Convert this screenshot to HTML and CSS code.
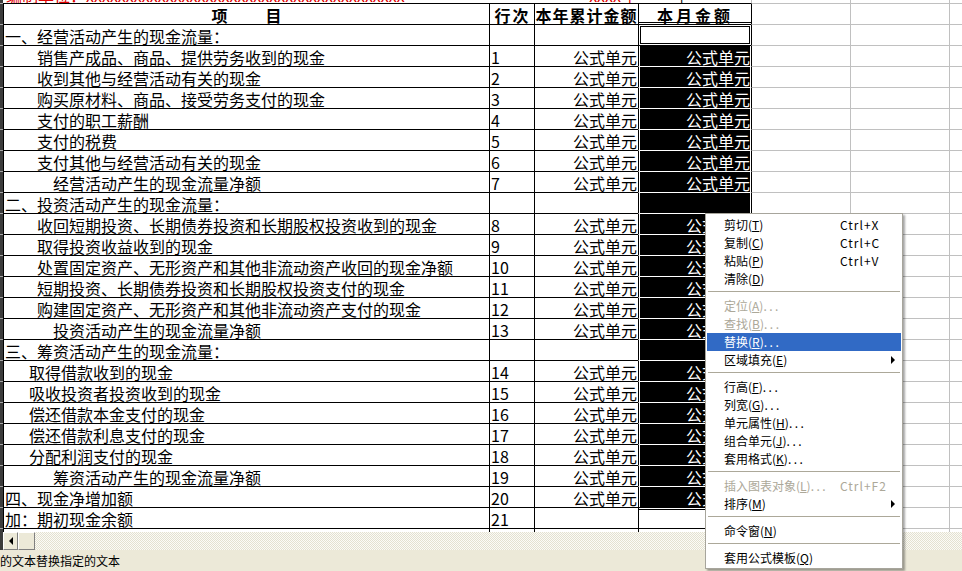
FILE: index.html
```html
<!DOCTYPE html>
<html lang="zh-CN">
<head>
<meta charset="utf-8">
<title>现金流量表</title>
<link rel="stylesheet" href="styles.css">
</head>
<body>
<div class="sheet">
  <div class="row title">
    <div class="st"></div>
    <div class="c1"><span class="red">编制单位：xxxxxxxxxxxxxxxxxxxxxxxxxxxxxxxxxxxxxxxx</span></div>
    <div class="c2"></div>
    <div class="c3"><span class="red">xxxx年</span></div>
    <div class="c4"><span class="blk">| — — — _</span></div>
    <div class="g"></div><div class="g"></div><div class="g"></div>
  </div>
  <div class="row hd">
    <div class="st"></div>
    <div class="c1"><span class="xm">项</span><span>目</span></div>
    <div class="c2 ls2">行次</div>
    <div class="c3 ls1">本年累计金额</div>
    <div class="c4 ls3 hdsel">本月金额</div>
    <div class="g g1"></div><div class="g"></div><div class="g"></div>
  </div>
  <div class="row">
    <div class="st"></div><div class="c1 i0">一、经营活动产生的现金流量：</div><div class="c2"></div><div class="c3"></div><div class="c4 act"></div>
    <div class="g g1"></div><div class="g"></div><div class="g"></div>
  </div>
  <div class="row">
    <div class="st"></div><div class="c1 i2">销售产成品、商品、提供劳务收到的现金</div><div class="c2">1</div><div class="c3">公式单元</div><div class="c4 s first">公式单元</div>
    <div class="g g1"></div><div class="g"></div><div class="g"></div>
  </div>
  <div class="row">
    <div class="st"></div><div class="c1 i2">收到其他与经营活动有关的现金</div><div class="c2">2</div><div class="c3">公式单元</div><div class="c4 s">公式单元</div>
    <div class="g g1"></div><div class="g"></div><div class="g"></div>
  </div>
  <div class="row">
    <div class="st"></div><div class="c1 i2">购买原材料、商品、接受劳务支付的现金</div><div class="c2">3</div><div class="c3">公式单元</div><div class="c4 s">公式单元</div>
    <div class="g g1"></div><div class="g"></div><div class="g"></div>
  </div>
  <div class="row">
    <div class="st"></div><div class="c1 i2">支付的职工薪酬</div><div class="c2">4</div><div class="c3">公式单元</div><div class="c4 s">公式单元</div>
    <div class="g g1"></div><div class="g"></div><div class="g"></div>
  </div>
  <div class="row">
    <div class="st"></div><div class="c1 i2">支付的税费</div><div class="c2">5</div><div class="c3">公式单元</div><div class="c4 s">公式单元</div>
    <div class="g g1"></div><div class="g"></div><div class="g"></div>
  </div>
  <div class="row">
    <div class="st"></div><div class="c1 i2">支付其他与经营活动有关的现金</div><div class="c2">6</div><div class="c3">公式单元</div><div class="c4 s">公式单元</div>
    <div class="g g1"></div><div class="g"></div><div class="g"></div>
  </div>
  <div class="row">
    <div class="st"></div><div class="c1 i3">经营活动产生的现金流量净额</div><div class="c2">7</div><div class="c3">公式单元</div><div class="c4 s">公式单元</div>
    <div class="g g1"></div><div class="g"></div><div class="g"></div>
  </div>
  <div class="row">
    <div class="st"></div><div class="c1 i0">二、投资活动产生的现金流量：</div><div class="c2"></div><div class="c3"></div><div class="c4 s"></div>
    <div class="g g1"></div><div class="g"></div><div class="g"></div>
  </div>
  <div class="row">
    <div class="st"></div><div class="c1 i2">收回短期投资、长期债券投资和长期股权投资收到的现金</div><div class="c2">8</div><div class="c3">公式单元</div><div class="c4 s">公式单元</div>
    <div class="g g1"></div><div class="g"></div><div class="g"></div>
  </div>
  <div class="row">
    <div class="st"></div><div class="c1 i2">取得投资收益收到的现金</div><div class="c2">9</div><div class="c3">公式单元</div><div class="c4 s">公式单元</div>
    <div class="g g1"></div><div class="g"></div><div class="g"></div>
  </div>
  <div class="row">
    <div class="st"></div><div class="c1 i2">处置固定资产、无形资产和其他非流动资产收回的现金净额</div><div class="c2">10</div><div class="c3">公式单元</div><div class="c4 s">公式单元</div>
    <div class="g g1"></div><div class="g"></div><div class="g"></div>
  </div>
  <div class="row">
    <div class="st"></div><div class="c1 i2">短期投资、长期债券投资和长期股权投资支付的现金</div><div class="c2">11</div><div class="c3">公式单元</div><div class="c4 s">公式单元</div>
    <div class="g g1"></div><div class="g"></div><div class="g"></div>
  </div>
  <div class="row">
    <div class="st"></div><div class="c1 i2">购建固定资产、无形资产和其他非流动资产支付的现金</div><div class="c2">12</div><div class="c3">公式单元</div><div class="c4 s">公式单元</div>
    <div class="g g1"></div><div class="g"></div><div class="g"></div>
  </div>
  <div class="row">
    <div class="st"></div><div class="c1 i3">投资活动产生的现金流量净额</div><div class="c2">13</div><div class="c3">公式单元</div><div class="c4 s">公式单元</div>
    <div class="g g1"></div><div class="g"></div><div class="g"></div>
  </div>
  <div class="row">
    <div class="st"></div><div class="c1 i0">三、筹资活动产生的现金流量：</div><div class="c2"></div><div class="c3"></div><div class="c4 s"></div>
    <div class="g g1"></div><div class="g"></div><div class="g"></div>
  </div>
  <div class="row">
    <div class="st"></div><div class="c1 i1">取得借款收到的现金</div><div class="c2">14</div><div class="c3">公式单元</div><div class="c4 s">公式单元</div>
    <div class="g g1"></div><div class="g"></div><div class="g"></div>
  </div>
  <div class="row">
    <div class="st"></div><div class="c1 i1">吸收投资者投资收到的现金</div><div class="c2">15</div><div class="c3">公式单元</div><div class="c4 s">公式单元</div>
    <div class="g g1"></div><div class="g"></div><div class="g"></div>
  </div>
  <div class="row">
    <div class="st"></div><div class="c1 i1">偿还借款本金支付的现金</div><div class="c2">16</div><div class="c3">公式单元</div><div class="c4 s">公式单元</div>
    <div class="g g1"></div><div class="g"></div><div class="g"></div>
  </div>
  <div class="row">
    <div class="st"></div><div class="c1 i1">偿还借款利息支付的现金</div><div class="c2">17</div><div class="c3">公式单元</div><div class="c4 s">公式单元</div>
    <div class="g g1"></div><div class="g"></div><div class="g"></div>
  </div>
  <div class="row">
    <div class="st"></div><div class="c1 i1">分配利润支付的现金</div><div class="c2">18</div><div class="c3">公式单元</div><div class="c4 s">公式单元</div>
    <div class="g g1"></div><div class="g"></div><div class="g"></div>
  </div>
  <div class="row">
    <div class="st"></div><div class="c1 i3">筹资活动产生的现金流量净额</div><div class="c2">19</div><div class="c3">公式单元</div><div class="c4 s">公式单元</div>
    <div class="g g1"></div><div class="g"></div><div class="g"></div>
  </div>
  <div class="row">
    <div class="st"></div><div class="c1 i0">四、现金净增加额</div><div class="c2">20</div><div class="c3">公式单元</div><div class="c4 s">公式单元</div>
    <div class="g g1"></div><div class="g"></div><div class="g"></div>
  </div>
  <div class="row">
    <div class="st"></div><div class="c1 i0">加：期初现金余额</div><div class="c2">21</div><div class="c3"></div><div class="c4 below"></div>
    <div class="g g1"></div><div class="g"></div><div class="g"></div>
  </div>
  <div class="row">
    <div class="st"></div><div class="c1 i0">五、期末现金余额</div><div class="c2">22</div><div class="c3">公式单元</div><div class="c4"></div>
    <div class="g g1"></div><div class="g"></div><div class="g"></div>
  </div>
</div>

<div class="hs">
  <div class="hst"></div>
  <div class="btn"><i class="la"></i></div>
  <div class="btn b2"></div>
  <div class="hatch"></div>
</div>
<div class="status">的文本替换指定的文本</div>

<div class="menu">
  <div class="mi"><span class="lb">剪切(<u>T</u>)</span><span class="sc">Ctrl+X</span></div>
  <div class="mi"><span class="lb">复制(<u>C</u>)</span><span class="sc">Ctrl+C</span></div>
  <div class="mi"><span class="lb">粘贴(<u>P</u>)</span><span class="sc">Ctrl+V</span></div>
  <div class="mi"><span class="lb">清除(<u>D</u>)</span></div>
  <div class="sep"></div>
  <div class="mi dis"><span class="lb">定位(<u>A</u>)<span class="dots">...</span></span></div>
  <div class="mi dis"><span class="lb">查找(<u>B</u>)<span class="dots">...</span></span></div>
  <div class="mi hl"><span class="lb">替换(<u>R</u>)<span class="dots">...</span></span></div>
  <div class="mi"><span class="lb">区域填充(<u>E</u>)</span><i class="arr"></i></div>
  <div class="sep"></div>
  <div class="mi"><span class="lb">行高(<u>F</u>)<span class="dots">...</span></span></div>
  <div class="mi"><span class="lb">列宽(<u>G</u>)<span class="dots">...</span></span></div>
  <div class="mi"><span class="lb">单元属性(<u>H</u>)<span class="dots">...</span></span></div>
  <div class="mi"><span class="lb">组合单元(<u>J</u>)<span class="dots">...</span></span></div>
  <div class="mi"><span class="lb">套用格式(<u>K</u>)<span class="dots">...</span></span></div>
  <div class="sep"></div>
  <div class="mi dis"><span class="lb">插入图表对象(<u>L</u>)<span class="dots">...</span></span><span class="sc">Ctrl+F2</span></div>
  <div class="mi"><span class="lb">排序(<u>M</u>)</span><i class="arr"></i></div>
  <div class="sep"></div>
  <div class="mi"><span class="lb">命令窗(<u>N</u>)</span></div>
  <div class="sep"></div>
  <div class="mi"><span class="lb">套用公式模板(<u>Q</u>)</span></div>
</div>
</body>
</html>
```
FILE: styles.css
```css
html, body {
  margin: 0;
  padding: 0;
}
body {
  width: 962px;
  height: 571px;
  overflow: hidden;
  position: relative;
  background: #fff;
  color: #000;
  font-family: "Noto Sans CJK SC", "Noto Sans", sans-serif;
}

.sheet {
  height: 532px;
  overflow: hidden;
  background: #fff;
}

.row {
  display: grid;
  grid-template-columns: 3px 486px 45px 104px 113px 99px 99px 1fr;
  height: 21px;
}
.row > div {
  box-sizing: border-box;
  border-top: 1px solid #000;
  border-left: 1px solid #000;
  overflow: hidden;
  white-space: nowrap;
  font-size: 16px;
  line-height: 22px;
}
.row > .st {
  border-left: 0;
  border-top: 1px solid #a8a8a8;
  background: #3c3c3c;
}
.row > .g {
  border-top-color: #c0c0c0;
  border-left-color: #c0c0c0;
}
.row > .g1 {
  border-left-color: #000;
}

/* clipped title strip */
.row.title {
  height: 3px;
}
.row.title > div {
  border-top: 0;
  line-height: 16px;
}
.row.title > .c1,
.row.title > .c2,
.row.title > .c3,
.row.title > .c4 {
  border-left-color: transparent;
}
.red {
  display: block;
  margin-top: -13px;
  color: #e00000;
  padding-left: 2px;
}
.blk {
  display: block;
  margin-top: -13px;
  color: #000;
  padding-left: 4px;
}

/* header */
.hd > div {
  font-weight: 700;
  text-align: center;
}
.xm {
  margin-right: 38px;
}
.ls1 { letter-spacing: 1px; }
.ls2 { letter-spacing: 2px; }
.ls3 { letter-spacing: 3px; }
.row.hd > .c3,
.row.hd > .c4 {
  text-align: center;
  padding-right: 0;
}
.hdsel {
  box-shadow: inset 0 -1px 0 #fff, inset 0 -2px 0 #000;
}

/* cells */
.i0 { padding-left: 1px; }
.i1 { padding-left: 25px; }
.i2 { padding-left: 33px; }
.i3 { padding-left: 49px; }
.c2 { padding-left: 1px; }
.c3, .c4 {
  text-align: right;
  padding-right: 1px;
}

/* selection */
.row > .c4.s {
  background: #000;
  color: #fff;
  border-top-color: #fff;
  box-shadow: inset 1px 0 0 #fff, inset -1px 0 0 #fff;
}
.row > .c4.s.first {
  border-top-color: #000;
}
.row > .c4.act {
  box-shadow: inset 0 0 0 1px #fff, inset 0 0 0 2px #000;
}
.row > .c4.below {
  box-shadow: inset 0 1px 0 #fff, inset 0 2px 0 #000;
}

/* horizontal scroll row */
.hs {
  display: flex;
  height: 18px;
}
.hst {
  width: 3px;
  background: #3c3c3c;
}
.btn {
  width: 15px;
  box-sizing: border-box;
  background: #ece9d8;
  border: 1px solid;
  border-color: #fff #808080 #808080 #fff;
  display: flex;
  align-items: center;
  justify-content: center;
}
.b2 {
  width: 17px;
}
.la {
  width: 0;
  height: 0;
  border-right: 4px solid #000;
  border-top: 4px solid transparent;
  border-bottom: 4px solid transparent;
}
.hatch {
  flex: 1;
  background: repeating-conic-gradient(#e4e1d0 0 25%, #fbfbf7 0 50%) 0 0 / 2px 2px;
}

/* status bar */
.status {
  height: 21px;
  background: #ece9d8;
  font-size: 12px;
  line-height: 21px;
  white-space: nowrap;
}

/* context menu */
.menu {
  position: absolute;
  left: 705px;
  top: 213px;
  width: 198px;
  box-sizing: border-box;
  background: #fff;
  border: 1px solid #a7a59c;
  padding: 2px 1px 1px;
  box-shadow: 2px 2px 2px rgba(0, 0, 0, 0.35);
  font-size: 12px;
}
.mi {
  display: flex;
  align-items: center;
  height: 18px;
  line-height: 18px;
  padding-left: 17px;
  white-space: nowrap;
}
.mi .lb {
  width: 116px;
}
.mi .sc {
  letter-spacing: 1px;
}
.mi u {
  text-decoration: underline;
  text-underline-offset: 1px;
}
.dots {
  letter-spacing: 2.5px;
}
.mi.dis {
  color: #aca899;
}
.mi.hl {
  background: #316ac5;
  color: #fff;
}
.arr {
  margin-left: auto;
  margin-right: 6px;
  width: 0;
  height: 0;
  border-left: 4px solid #000;
  border-top: 4px solid transparent;
  border-bottom: 4px solid transparent;
}
.sep {
  height: 1px;
  background: #aca899;
  margin: 3px 1px 5px;
}
```
